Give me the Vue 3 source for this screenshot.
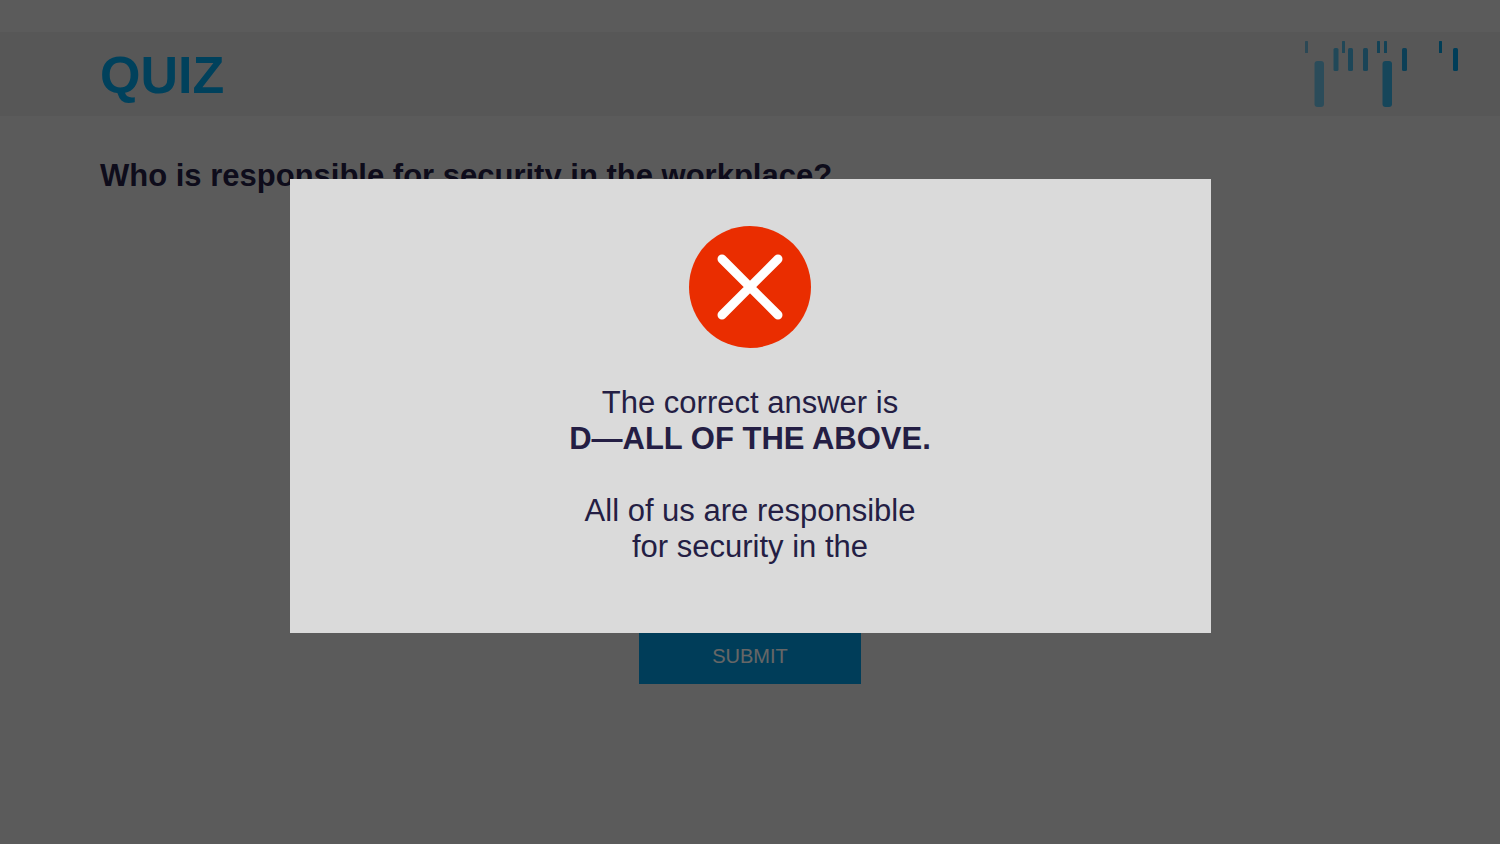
<script setup>
const bars = [
  { x: 1, y: 0, w: 3, h: 12, r: 0.5, c: '#6cb4d4' },
  { x: 10.5, y: 20, w: 9.5, h: 46, r: 3, c: '#6cbfe2' },
  { x: 29.5, y: 7, w: 5, h: 23, r: 1.5, c: '#54b5dc' },
  { x: 38, y: 0, w: 3, h: 12, r: 0.5, c: '#50b2da' },
  { x: 44, y: 7, w: 5, h: 23, r: 1.5, c: '#49b0dc' },
  { x: 59, y: 7, w: 5, h: 23, r: 1.5, c: '#42abd9' },
  { x: 73, y: 0, w: 3, h: 12, r: 0.5, c: '#30a5d7' },
  { x: 80, y: 0, w: 3, h: 12, r: 0.5, c: '#30a5d7' },
  { x: 78.5, y: 20, w: 9.5, h: 46, r: 3, c: '#37aee0' },
  { x: 98, y: 7, w: 5, h: 23, r: 1.5, c: '#209fd6' },
  { x: 135, y: 0, w: 3, h: 12, r: 0.5, c: '#0099d8' },
  { x: 149, y: 7, w: 5, h: 23, r: 1.5, c: '#0099dc' },
]
</script>

<template>
  <div class="page">
    <header class="header">
      <h1>QUIZ</h1>
      <svg class="logo" width="154" height="66" viewBox="0 0 154 66" aria-hidden="true">
        <rect v-for="(b, i) in bars" :key="i" :x="b.x" :y="b.y" :width="b.w" :height="b.h" :rx="b.r" :fill="b.c" />
      </svg>
    </header>
    <main class="quiz">
      <h2>Who is responsible for security in the workplace?</h2>
      <button class="submit" type="button">SUBMIT</button>
    </main>
    <div class="overlay">
      <section class="modal" role="dialog" aria-modal="true" aria-labelledby="answer">
        <svg width="122" height="122" viewBox="0 0 122 122" aria-hidden="true">
          <circle cx="61" cy="61" r="61" fill="#ea2d00" />
          <path d="M33 33 89 89M89 33 33 89" fill="none" stroke="#fff" stroke-width="9" stroke-linecap="round" />
        </svg>
        <p id="answer">The correct answer is<br /><strong>D—ALL OF THE ABOVE.</strong></p>
        <p>All of us are responsible<br />for security in the</p>
      </section>
    </div>
  </div>
</template>

<style>
body {
  margin: 0;
  background: #e4e4e4;
}
</style>

<style scoped>
.page {
  box-sizing: border-box;
  min-height: 100vh;
  padding-top: 32px;
  display: flex;
  flex-direction: column;
  background: #e4e4e4;
  color: #241e44;
  font-family: "Liberation Sans", Arial, sans-serif;
}
.header {
  display: flex;
  align-items: center;
  justify-content: space-between;
  height: 84px;
  padding: 0 42px 0 100px;
  background: #dadada;
}
h1 {
  margin: 0;
  padding-top: 2px;
  color: #00a3e6;
  font-size: 52px;
  line-height: 60px;
}
.quiz {
  flex: 1;
  display: flex;
  flex-direction: column;
  justify-content: space-between;
  padding: 42px 100px 160px;
}
h2 {
  margin: 0;
  font-size: 31px;
  line-height: 36px;
}
.submit {
  align-self: center;
  width: 222px;
  height: 56px;
  padding: 0;
  border: 0;
  background: #0099de;
  color: #fff;
  font-family: inherit;
  font-size: 20px;
  line-height: 24px;
}
.overlay {
  position: fixed;
  inset: 0;
  box-sizing: border-box;
  display: flex;
  align-items: center;
  justify-content: center;
  padding-bottom: 32px;
  background: rgba(0, 0, 0, 0.6);
}
.modal {
  box-sizing: border-box;
  width: 921px;
  max-width: 90%;
  padding: 47px 40px 68px;
  background: #dadada;
  text-align: center;
  font-size: 31px;
  line-height: 36px;
}
.modal svg {
  display: block;
  margin: 0 auto 37px;
}
p {
  margin: 0;
}
p + p {
  margin-top: 36px;
}
</style>
